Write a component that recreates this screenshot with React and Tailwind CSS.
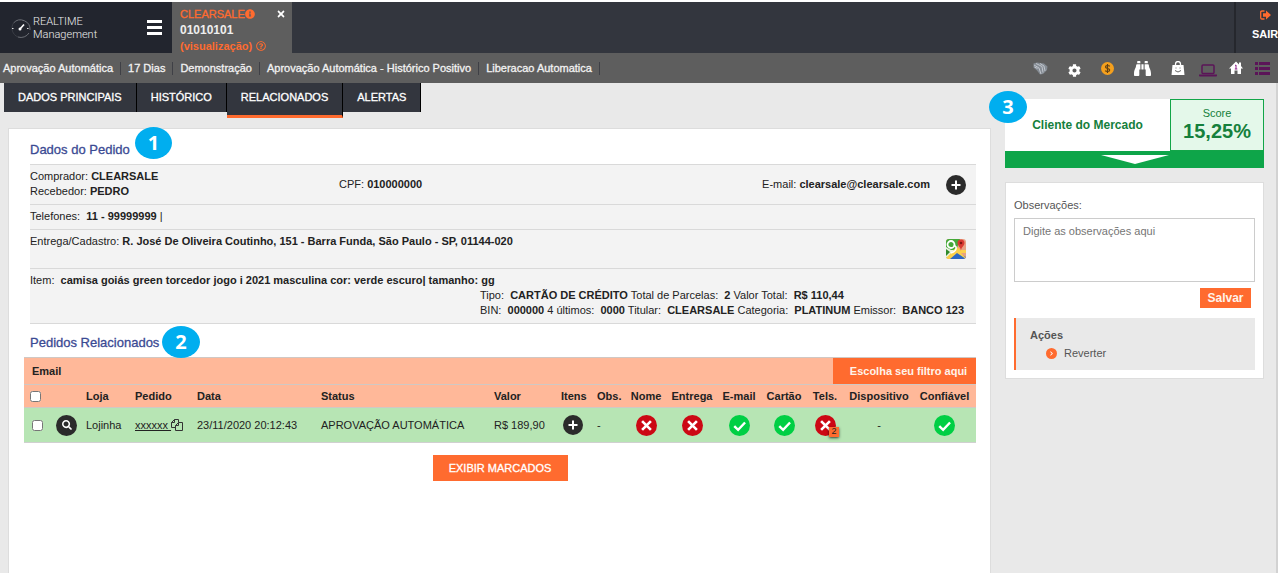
import { FaInfoCircle, FaTimes, FaCog, FaBinoculars, FaRegQuestionCircle, FaSearch, FaChevronRight } from "react-icons/fa";

const tags = ["Aprovação Automática", "17 Dias", "Demonstração", "Aprovação Automática - Histórico Positivo", "Liberacao Automatica"];

function Step({ n, className }) {
  return (
    <span className={`absolute flex h-8 items-center justify-center rounded-[50%] bg-[#00aeef] font-['Open_Sans',sans-serif] text-xl leading-none font-bold text-white ${className}`}>
      {n}
    </span>
  );
}

function Plus() {
  return (
    <svg viewBox="0 0 20 20" className="block h-5 w-5">
      <circle cx="10" cy="10" r="10" fill="#2b2b2b" />
      <path d="M10 5.500v9M5.500 10h9" stroke="#fff" strokeWidth="2" />
    </svg>
  );
}

function Status({ ok }) {
  return (
    <svg viewBox="0 0 20 20" className="mx-auto block h-[21px] w-[21px]" role="img" aria-label={ok ? "Confere" : "Não confere"}>
      <circle cx="10" cy="10" r="10" fill={ok ? "#00cf44" : "#cc0814"} />
      {ok ? (
        <path d="M5 10.500l3.700 3.600 6.600-7" stroke="#fff" strokeWidth="2.300" fill="none" />
      ) : (
        <path d="M5.800 5.800l8.400 8.400M14.200 5.800l-8.400 8.400" stroke="#fff" strokeWidth="2.500" fill="none" />
      )}
    </svg>
  );
}

function MapIcon() {
  return (
    <svg viewBox="0 0 20 20" className="block h-5 w-5">
      <defs>
        <clipPath id="map">
          <rect width="20" height="20" rx="3" />
        </clipPath>
      </defs>
      <g clipPath="url(#map)">
        <rect width="20" height="20" fill="#e8a183" />
        <path d="M0 0h14l-3 9L0 20z" fill="#45a938" />
        <path d="M3 20l8-7 9 5v2z" fill="#2c67c4" />
        <path d="M0 17L11 8l4 3 5 0v3l-5 0 5 5v1l-9-6-7 6H0z" fill="#fbd04b" />
        <path d="M0 8l5 3 3 0-8 8z" fill="#e9f2df" />
        <path d="M0 10l4 3-4 4z" fill="#2f8a2b" />
        <circle cx="5" cy="5.500" r="3.500" fill="none" stroke="#fff" strokeWidth="1.800" />
        <path d="M8 6l2 2q1 4-5 6" fill="none" stroke="#fff" strokeWidth="1.600" />
        <path d="M15 12c0-4-3.500-5-3.500-8a3.500 3.500 0 0 1 7 0c0 3-3.500 4-3.500 8z" fill="#d93a32" />
        <circle cx="15" cy="4" r="1.300" fill="#7e1512" />
      </g>
    </svg>
  );
}

function ToolIcons() {
  return (
    <div className="flex h-full shrink-0 items-center pr-2 text-white">
      <button aria-label="Impressão digital" className="mr-5">
        <svg viewBox="0 0 15 13" className="h-[13px] w-[15px]" fill="none">
          <path d="M.500 1.500L4 .500l7 1 3.500 3L14 8l-4 4-3 .500-3-4-3.500-3z" fill="#858c94" />
          <path d="M1 3l5 3 2 6M3 1.500l6 3 1 6M7 1.500l4 2.500 1 5M1.500 5l3 1.500" stroke="#c6cbd1" strokeWidth=".9" />
        </svg>
      </button>
      <button aria-label="Configurações" className="mr-5 pt-1"><FaCog size={13} /></button>
      <button aria-label="Financeiro" className="mr-5">
        <svg viewBox="0 0 13 13" className="h-[13px] w-[13px]">
          <circle cx="6.500" cy="6.500" r="6.500" fill="#f5a01d" />
          <path d="M8.800 4.300C8 3.300 4.500 3 4.500 5s4.200 1 4.200 3-3.600 1.800-4.500.6M6.500 2v9" stroke="#604014" strokeWidth="1.200" fill="none" />
        </svg>
      </button>
      <button aria-label="Pesquisar" className="mr-5 pt-px"><FaBinoculars size={17} /></button>
      <button aria-label="Loja" className="mr-3.5">
        <svg viewBox="0 0 14 14" className="h-3.5 w-3.5">
          <path d="M4.500 5V3a2.500 2.500 0 0 1 5 0v2" fill="none" stroke="#fff" strokeWidth="1.300" />
          <path d="M1.500 4h11l1 10H.5z" fill="#fff" />
          <path d="M4.500 7h1M8.500 7h1M4 9.500q3 3 6 0" stroke="#666" fill="none" />
        </svg>
      </button>
      <button aria-label="Dispositivo" className="mr-3 pt-1">
        <svg viewBox="0 0 18 13" className="h-[13px] w-[18px]">
          <rect x="3" y="1" width="12" height="8.500" rx="1" fill="none" stroke="#5b1458" strokeWidth="1.500" />
          <path d="M0 10.500h18v1q0 1-1 1H1q-1 0-1-1z" fill="#5b1458" />
        </svg>
      </button>
      <button aria-label="Endereço" className="mr-3">
        <svg viewBox="0 0 14 14" className="h-3.5 w-3.5">
          <path d="M7 .500l3 3V1.500h2V5l2 2.500h-2V13H8.500V9.500h-3V13H2V7.500H0z" fill="#fff" />
          <path d="M6 4.500l1-.500v4M5.800 8h2.500" stroke="#8b1d86" fill="none" />
        </svg>
      </button>
      <button aria-label="Lista">
        <svg viewBox="0 0 15 13" className="h-[13px] w-[15px]" fill="#5b1458">
          <path d="M0 0h3v3H0zM4 0h11v3H4zM0 5h3v3H0zM4 5h11v3H4zM0 10h3v3H0zM4 10h11v3H4z" />
        </svg>
      </button>
    </div>
  );
}

function Header() {
  return (
    <header className="flex h-[51px] bg-[#33363e] text-xs text-white">
      <div className="flex w-[172px] shrink-0 items-center bg-[#22252e] pl-2.5">
        <svg viewBox="0 0 22 22" className="h-[22px] w-[22px] shrink-0" fill="none">
          <path d="M3.500 6A9.500 9.500 0 0 1 20 13M19 16A9.500 9.500 0 0 1 8 20" stroke="#6b6e75" />
          <path d="M3.500 6A9.500 9.500 0 0 0 8 20" stroke="#3a3d45" />
          <path d="M9.500 12.500l4.500-5" stroke="#fff" strokeWidth="1.600" />
          <circle cx="10" cy="12" r="1.500" fill="#fff" />
          <path d="M2 11.500h1.500M17 11.500h1.500" stroke="#ddd" />
        </svg>
        <div className="ml-px font-['Roboto',sans-serif] text-[11px] leading-[13px] font-light text-[#eee]">
          <div>REALTIME</div>
          <div>Management</div>
        </div>
        <button aria-label="Menu" className="mr-2.5 ml-auto flex w-[15px] flex-col gap-[3px]">
          <span className="h-[3px] bg-white" /><span className="h-[3px] bg-white" /><span className="h-[3px] bg-white" />
        </button>
      </div>
      <div className="flex w-[120px] shrink-0 justify-between bg-[#5e5e5e] pt-1 pr-1.5 pl-2 leading-4">
        <div>
          <div className="flex items-center text-[11px] text-[#ff6b2f] [-webkit-text-stroke:0.3px]">CLEARSALE<FaInfoCircle size={10} /></div>
          <div className="font-bold text-[#eee]">01010101</div>
          <div className="flex items-center gap-1 text-[11px] font-bold text-[#ff6b2f]">(visualização)<FaRegQuestionCircle size={10} /></div>
        </div>
        <button aria-label="Fechar" className="h-4"><FaTimes size={10} /></button>
      </div>
      <div className="ml-auto flex w-11 shrink-0 flex-col border-l-2 border-[#25272d] pt-2 pl-4">
        <a href="#sair" className="flex flex-col">
          <svg viewBox="0 0 11 10" className="ml-2 h-2.5 w-[11px]">
            <path d="M4.500 1H2Q.700 1 .700 2.300v5.400Q.700 9 2 9h2.500" fill="none" stroke="#ff6b2f" strokeWidth="1.300" />
            <path d="M3 3.200h3V.500L11 5 6 9.500V6.800H3z" fill="#ff6b2f" />
          </svg>
          <span className="mt-1 text-[11px] leading-5 font-bold">SAIR</span>
        </a>
      </div>
    </header>
  );
}

const tab = "border-r border-black bg-[#33363e] px-3.5 text-center text-[11px] text-white [-webkit-text-stroke:0.3px]";

function OrderData() {
  const row = "border-t border-[#d9d9d9]";
  return (
    <section>
      <div className="relative h-[35px] pt-3 pl-[6px]">
        <h2 className="text-[13px] leading-[18px] text-[#3b4a93] [-webkit-text-stroke:0.3px]">Dados do Pedido</h2>
        <Step n={1} className="-top-0.5 left-[111px] w-[37px]" />
      </div>
      <div className="ml-[6px] bg-[#f3f3f3] text-[11px] leading-[15px] text-[#222]">
        <div className={`flex h-10 ${row}`}>
          <div className="w-[309px] pt-1">
            <div>Comprador: <b>CLEARSALE</b></div>
            <div>Recebedor: <b>PEDRO</b></div>
          </div>
          <div className="pt-3">CPF: <b>010000000</b></div>
          <div className="ml-auto pt-3">E-mail: <b>clearsale@clearsale.com</b></div>
          <button aria-label="Mais dados" className="mr-2.5 ml-4 self-center"><Plus /></button>
        </div>
        <div className={`h-[25px] pt-1 ${row}`}>Telefones: &nbsp;<b>11 - 99999999</b> |</div>
        <div className={`flex h-[39px] justify-between pt-1 pr-2.5 ${row}`}>
          <div>Entrega/Cadastro: <b>R. José De Oliveira Coutinho, 151 - Barra Funda, São Paulo - SP, 01144-020</b></div>
          <button aria-label="Ver no mapa" className="mb-1"><MapIcon /></button>
        </div>
        <div className={`h-[56px] border-b pt-1 ${row}`}>
          <div>Item: &nbsp;<b>camisa goiás green torcedor jogo i 2021 masculina cor: verde escuro| tamanho: gg</b></div>
          <div className="pl-[450px] whitespace-nowrap">Tipo: &nbsp;<b>CARTÃO DE CRÉDITO</b> Total de Parcelas: &nbsp;<b>2</b> Valor Total: &nbsp;<b>R$ 110,44</b></div>
          <div className="pl-[450px] whitespace-nowrap">BIN: &nbsp;<b>000000</b> 4 últimos: &nbsp;<b>0000</b> Titular: &nbsp;<b>CLEARSALE</b> Categoria: &nbsp;<b>PLATINUM</b> Emissor: &nbsp;<b>BANCO 123</b></div>
        </div>
      </div>
    </section>
  );
}

const centred = ["Nome", "Entrega", "E-mail", "Cartão", "Tels.", "Dispositivo", "Confiável"];

function RelatedOrders() {
  return (
    <section>
      <div className="relative h-[33px] pt-2.5 pl-[6px]">
        <h2 className="text-[13px] leading-[18px] text-[#3b4a93] [-webkit-text-stroke:0.3px]">Pedidos Relacionados</h2>
        <Step n={2} className="top-0.5 left-[138px] w-[38px]" />
      </div>
      <div className="flex h-[27px] justify-between border-t border-[#d0c8c4] bg-[#ffb899] text-[11px] text-[#222]">
        <span className="pt-1 pl-2 leading-[18px] font-bold">Email</span>
        <button className="w-[143px] bg-[#ff6b2f] pl-2 font-bold whitespace-nowrap text-[#fff3ea]">Escolha seu filtro aqui</button>
      </div>
      <table className="w-full table-fixed whitespace-nowrap text-[#222]">
        <colgroup>
          <col className="w-[25px]" /><col className="w-[37px]" /><col className="w-[49px]" /><col className="w-[62px]" />
          <col className="w-[124px]" /><col className="w-[173px]" /><col className="w-[67px]" /><col className="w-[36px]" />
          <col className="w-[26px]" /><col className="w-[46px]" /><col className="w-[46px]" /><col className="w-[48px]" />
          <col className="w-[42px]" /><col className="w-[40px]" /><col className="w-[68px]" /><col className="w-[63px]" />
        </colgroup>
        <thead>
          <tr className="h-[23px] border-y border-[#d0c8c4] bg-[#ffb899] text-left text-[11px]">
            <th className="pl-[6px]"><input type="checkbox" aria-label="Marcar todos" className="block h-[11px] w-[11px]" /></th>
            <td />
            {["Loja", "Pedido", "Data", "Status", "Valor", "Itens", "Obs."].map((h) => <th key={h}>{h}</th>)}
            {centred.map((h) => <th key={h} className="text-center">{h}</th>)}
          </tr>
        </thead>
        <tbody>
          <tr className="h-[35px] border-b border-[#d0d0d0] bg-[#b7e5b4] text-[11px]">
            <td className="pl-2"><input type="checkbox" aria-label="Marcar pedido" className="block h-[11px] w-[11px]" /></td>
            <td className="pl-[7px]">
              <button aria-label="Ver pedido" className="flex h-[21px] w-[21px] items-center justify-center rounded-full bg-[#2b2b2b] text-white"><FaSearch size={10} /></button>
            </td>
            <td>Lojinha</td>
            <td>
              <a href="#pedido" className="flex items-center">
                <span className="underline">xxxxxx&nbsp;</span>
                <svg viewBox="0 0 12 12" className="h-3 w-3 shrink-0" fill="none" stroke="#333">
                  <path d="M7.500 3V.500h-4l-3 3v5h4M3.500.500v3h-3" />
                  <path d="M7.500 3.500h4v8h-7v-5zM7.500 3.500v3h-3" />
                </svg>
              </a>
            </td>
            <td>23/11/2020 20:12:43</td>
            <td>APROVAÇÃO AUTOMÁTICA</td>
            <td>R$ 189,90</td>
            <td className="pl-0.5"><button aria-label="Ver itens" className="block"><Plus /></button></td>
            <td>-</td>
            <td><Status /></td>
            <td><Status /></td>
            <td><Status ok /></td>
            <td><Status ok /></td>
            <td>
              <div className="relative">
                <Status />
                <span className="absolute top-3 right-1.5 flex h-2.5 w-2.5 items-center justify-center bg-[#ff6b2f] text-[9px] leading-none shadow-sm shadow-black/60">2</span>
              </div>
            </td>
            <td className="text-center">-</td>
            <td><Status ok /></td>
          </tr>
        </tbody>
      </table>
      <div className="mt-3 text-center">
        <button className="h-[26px] w-[135px] bg-[#ff6b2f] text-[11px] text-white [-webkit-text-stroke:0.3px]">EXIBIR MARCADOS</button>
      </div>
    </section>
  );
}

function Sidebar() {
  return (
    <aside className="w-[259px] shrink-0 pt-4">
      <div className="relative">
        <Step n={3} className="-top-2 -left-4 w-[38px]" />
        <div className="flex h-[52px] bg-white">
          <div className="flex flex-1 items-center justify-center text-xs font-bold text-[#15803c]">Cliente do Mercado</div>
          <div className="w-[94px] border border-[#12a548] bg-[#e4f8ea] pt-1.5 text-center text-[#15803c]">
            <div className="text-[11px] leading-[14px]">Score</div>
            <div className="text-xl leading-[22px] font-bold">15,25%</div>
          </div>
        </div>
        <button aria-label="Expandir" className="flex h-[17px] w-full justify-center bg-[#0ea549] pt-1">
          <svg viewBox="0 0 68 9" className="h-[9px] w-[68px]"><path d="M0 0h68L34 9z" fill="#fff" /></svg>
        </button>
      </div>
      <div className="mt-3.5 h-[197px] border border-[#ddd] bg-white px-2 pt-3.5 text-[11px] text-[#555]">
        <label htmlFor="obs" className="block leading-4">Observações:</label>
        <textarea id="obs" placeholder="Digite as observações aqui" className="mt-[5px] block h-16 w-full resize-none border border-[#ccc] px-2 py-1 leading-4 placeholder:text-[#757575]" />
        <div className="mt-1.5 flex justify-end pr-1">
          <button className="h-5 w-[51px] bg-[#ff6b2f] text-xs font-bold text-[#fff3ea]">Salvar</button>
        </div>
        <div className="mt-2.5 h-[52px] border-l-2 border-[#ff6b2f] bg-[#e9e9e9] pt-2 pl-3.5">
          <h3 className="leading-[18px] font-bold">Ações</h3>
          <a href="#reverter" className="ml-4 flex items-center leading-[18px]">
            <span className="mr-[7px] flex h-[11px] w-[11px] items-center justify-center rounded-full bg-[#ff6b2f] text-white"><FaChevronRight size={5} /></span>
            Reverter
          </a>
        </div>
      </div>
    </aside>
  );
}

export default function App() {
  return (
    <div className="flex min-h-screen flex-col overflow-x-hidden border-t-2 border-white bg-[#e9e9e9] font-['Liberation_Sans',Arial,sans-serif]">
      <Header />
      <div className="flex h-[30px] items-center justify-between bg-[#5e5e5e] text-[11px] text-[#f2f2f2]">
        <ul className="flex whitespace-nowrap">
          {tags.map((t) => <li key={t} className="border-r border-[#3f4046] px-[7px] leading-[13px] first:pl-[3px] [-webkit-text-stroke:0.3px]">{t}</li>)}
        </ul>
        <ToolIcons />
      </div>
      <div className="flex flex-1 border-r-2 border-[#d2d2d2] pr-3">
        <main className="flex min-w-0 flex-1 flex-col">
          <nav className="flex h-[45px] items-start pl-1 leading-[29px]">
            <button className={tab}>DADOS PRINCIPAIS</button>
            <button className={tab}>HISTÓRICO</button>
            <button className={`${tab} border-b-[3px] border-b-[#ff6b2f] pb-[3px]`}>RELACIONADOS</button>
            <button className={tab}>ALERTAS</button>
          </nav>
          <div className="mr-3.5 ml-2 flex-1 border border-b-0 border-[#ddd] bg-white pr-3.5 pl-[15px]">
            <OrderData />
            <RelatedOrders />
          </div>
        </main>
        <Sidebar />
      </div>
    </div>
  );
}
